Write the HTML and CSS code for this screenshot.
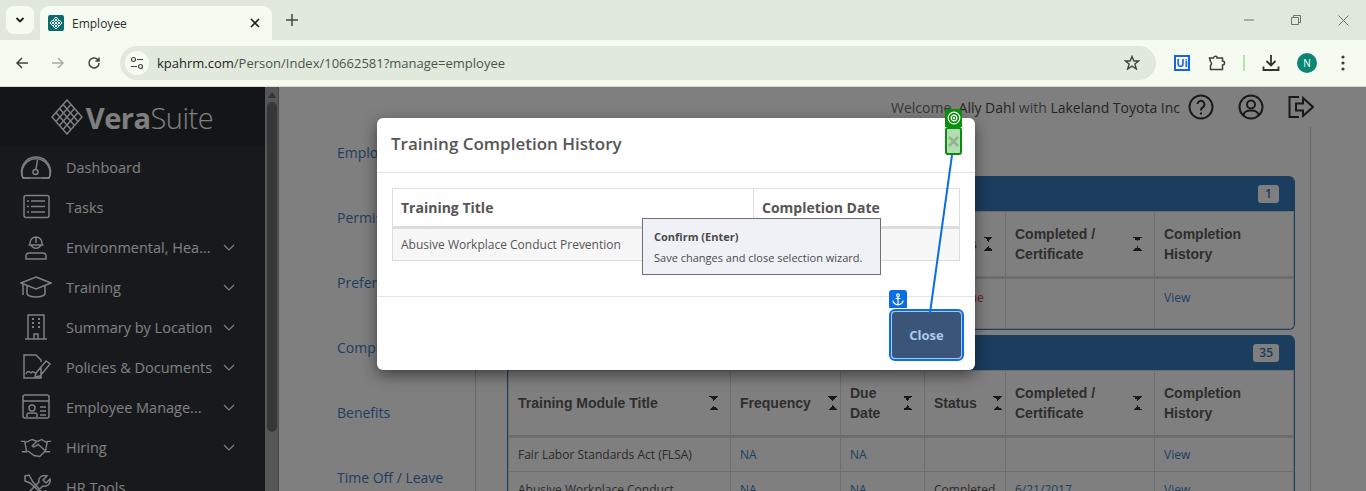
FILE: index.html
```html
<!DOCTYPE html>
<html lang="en">

<head>
    <meta charset="UTF-8">
    <title>Employee</title>
    <link rel="stylesheet" href="styles.css">
</head>

<body>
    <div class="tabstrip">
        <div class="tab-search">
            <svg width="12" height="12" viewBox="0 0 12 12"><path d="M2.5 4 6 7.5 9.5 4" fill="none" stroke="#1f1f1f" stroke-width="1.8"/></svg>
        </div>
        <div class="tab">
            <div class="favicon">
                <svg width="14" height="14" viewBox="0 0 14 14"><path d="M7 1 13 7 7 13 1 7Z M4 4 10 10 M7 1.500 M10 4 4 10 M5.500 2.500 11.500 8.500 M2.500 5.500 8.500 11.500 M8.500 2.500 2.500 8.500 M11.500 5.500 5.500 11.500" fill="none" stroke="#e6f3f2" stroke-width="1"/></svg>
            </div>
            <span class="tab-title">Employee</span>
            <svg class="tab-x" width="10" height="10" viewBox="0 0 10 10"><path d="M1 1 9 9M9 1 1 9" stroke="#1f1f1f" stroke-width="1.600"/></svg>
        </div>
        <svg class="new-tab" width="12" height="12" viewBox="0 0 12 12"><path d="M6 0V12M0 6H12" stroke="#444" stroke-width="1.500"/></svg>
        <div class="win-btns">
            <svg width="10" height="10" viewBox="0 0 10 10"><path d="M0 5H10" stroke="#6d736b" stroke-width="1"/></svg>
            <svg width="10" height="10" viewBox="0 0 10 10"><path d="M.5 2.500H7.500V9.500H.5ZM2.500 2.500V.5H9.500V7.500H7.500" fill="none" stroke="#6d736b" stroke-width="1"/></svg>
            <svg width="11" height="11" viewBox="0 0 11 11"><path d="M.5.5 10.500 10.500M10.500.5 .5 10.500" stroke="#6d736b" stroke-width="1"/></svg>
        </div>
    </div>

    <div class="toolbar">
        <svg class="nav-icon" width="14" height="14" viewBox="0 0 14 14"><path d="M13 7H2M7 2 2 7 7 12" fill="none" stroke="#3f443e" stroke-width="1.500"/></svg>
        <svg class="nav-icon" width="14" height="14" viewBox="0 0 14 14"><path d="M1 7H12M7 2 12 7 7 12" fill="none" stroke="#a9ada7" stroke-width="1.500"/></svg>
        <svg class="nav-icon" width="14" height="14" viewBox="0 0 14 14"><path d="M12 7A5 5 0 1 1 10.500 3.400L12 5M12 1.500V5H8.500" fill="none" stroke="#3f443e" stroke-width="1.500"/></svg>
        <div class="omnibox">
            <div class="site-btn">
                <svg width="14" height="14" viewBox="0 0 14 14" fill="none" stroke="#3f443e" stroke-width="1.200"><circle cx="3.500" cy="3.500" r="2"/><path d="M7 3.500H13M1 10.500H7"/><circle cx="10.500" cy="10.500" r="2"/></svg>
            </div>
            <span class="url">kpahrm.com<span class="url-path">/Person/Index/10662581?manage=employee</span></span>
            <svg class="star" width="16" height="16" viewBox="0 0 16 16"><path d="M8 1.500 9.900 6H14.700L10.900 9 12.300 14 8 11.200 3.700 14 5.100 9 1.300 6H6.100Z" fill="none" stroke="#3f443e" stroke-width="1.400"/></svg>
        </div>
        <div class="ext-ui">Ui</div>
        <svg class="ext-icon" width="18" height="18" viewBox="0 0 18 18"><path d="M1.500 4H5.500A2 2 0 0 1 9 3V4H14.500V7A2 2 0 0 1 14.500 11V15.500H2.500V11.500A2.500 2.500 0 0 0 2.500 7.500Z" fill="none" stroke="#3a3f39" stroke-width="1.500"/></svg>
        <div class="tool-sep"></div>
        <svg class="ext-dl" width="18" height="18" viewBox="0 0 18 18"><path d="M9 1V11M4.500 7 9 11.500 13.500 7M1.500 12.500V16H16.500V12.500" fill="none" stroke="#2f352e" stroke-width="1.800"/></svg>
        <div class="avatar">N</div>
        <svg class="dots" width="4" height="16" viewBox="0 0 4 16"><circle cx="2" cy="2" r="1.600" fill="#3a3f39"/><circle cx="2" cy="8" r="1.600" fill="#3a3f39"/><circle cx="2" cy="14" r="1.600" fill="#3a3f39"/></svg>
    </div>

    <div class="app">
        <aside class="sidebar">
            <div class="logo">
                <svg width="32" height="36" viewBox="0 0 32 36" fill="none" stroke="#fff" stroke-width="1.500"><path d="M16 1 31 18 16 35 1 18Z M8.500 9.500 23.500 26.500 M12 5.500 27 22.500 M5 13.500 20 30.500 M23.500 9.500 8.500 26.500 M27 13.500 12 30.500 M20 5.500 5 22.500"/></svg>
                <span class="logo-text"><b>Vera</b>Suite</span>
            </div>
            <nav class="side-nav">
                <a class="side-item">
                    <svg class="side-icon" viewBox="0 0 32 26" fill="none"><path d="M3 24A14 14 0 1 1 29 24Z" fill="none"/><path d="M3 24H10M22 24H29M3 24A14.500 14.500 0 1 1 29 24M17.500 6 16 15"/><circle cx="15.500" cy="18" r="2.500"/></svg>
                    <span>Dashboard</span>
                </a>
                <a class="side-item">
                    <svg class="side-icon" viewBox="0 0 32 26" fill="none"><rect x="4" y="1.500" width="25" height="22" rx="2"/><path d="M11 7H25M11 12.500H25M11 18H25M7 7H9M7 12.500H9M7 18H9"/></svg>
                    <span>Tasks</span>
                </a>
                <a class="side-item">
                    <svg class="side-icon" viewBox="0 0 32 26" fill="none"><path d="M10 9A6 6 0 0 1 22 9V11H10ZM8.500 11H23.500M16 3V9M11 11A5.500 5.500 0 0 0 21 11M6 25V21.500A3 3 0 0 1 9 19H23A3 3 0 0 1 26 21.500V25Z"/></svg>
                    <span>Environmental, Hea...</span>
                    <svg class="caret" viewBox="0 0 12 7"><path d="M1 1 6 6 11 1"/></svg>
                </a>
                <a class="side-item">
                    <svg class="side-icon" viewBox="0 0 32 26" fill="none"><path d="M16 3 31 9 16 15 1 9ZM7 12V20C10 24 22 24 25 20V12M3 10V21"/></svg>
                    <span>Training</span>
                    <svg class="caret" viewBox="0 0 12 7"><path d="M1 1 6 6 11 1"/></svg>
                </a>
                <a class="side-item">
                    <svg class="side-icon" viewBox="0 0 32 26" fill="none"><path d="M8 1H24V25H8ZM5 25H27M14 25V20H18V25"/><path d="M12 5H14M18 5H20M12 9H14M18 9H20M12 13H14M18 13H20" stroke-width="2"/></svg>
                    <span>Summary by Location</span>
                    <svg class="caret" viewBox="0 0 12 7"><path d="M1 1 6 6 11 1"/></svg>
                </a>
                <a class="side-item">
                    <svg class="side-icon" viewBox="0 0 32 26" fill="none"><path d="M21 13V24H4V1H16L21 6V8M6 20C9 14 10 21 12 18 13 17 14 19 16 19M16 19 26 7 30 10 20 22 15 23Z"/></svg>
                    <span>Policies &amp; Documents</span>
                    <svg class="caret" viewBox="0 0 12 7"><path d="M1 1 6 6 11 1"/></svg>
                </a>
                <a class="side-item">
                    <svg class="side-icon" viewBox="0 0 32 26" fill="none"><rect x="3" y="1" width="26" height="23" rx="2"/><path d="M3 7H29M20 13H26M20 17H26M20 21H26M7 23V21A2 2 0 0 1 9 19H15A2 2 0 0 1 17 21V23"/><circle cx="12" cy="14" r="3"/></svg>
                    <span>Employee Manage...</span>
                    <svg class="caret" viewBox="0 0 12 7"><path d="M1 1 6 6 11 1"/></svg>
                </a>
                <a class="side-item">
                    <svg class="side-icon" viewBox="0 0 34 26" fill="none"><path d="M1 7H5L7 18H2M33 7H29L27 18H32M6 8 13 5 18 7 13 12C15 14 18 11 19 10L27 17 21 23 15 22 8 17M19 7 23 5 28 8"/></svg>
                    <span>Hiring</span>
                    <svg class="caret" viewBox="0 0 12 7"><path d="M1 1 6 6 11 1"/></svg>
                </a>
                <a class="side-item">
                    <svg class="side-icon" viewBox="0 0 32 26" fill="none"><path d="M5 2 9 1 13 8 22 18 26 17 28 22 25 25 21 22 20 18 10 9 5 7ZM27 2 23 6 26 9 30 5C31 10 27 13 23 12L9 24H6V21L19 8C18 4 22 0 27 2Z"/></svg>
                    <span>HR Tools</span>
                </a>
            </nav>
        </aside>

        <div class="side-scroll">
            <div class="scroll-arrow"></div>
            <div class="scroll-thumb"></div>
        </div>

        <main class="content">
            <header class="top-bar">
                <span class="welcome">Welcome, <span class="strong">Ally Dahl</span> with <span class="strong">Lakeland Toyota Inc</span></span>
                <svg class="top-icon" viewBox="0 0 26 26" fill="none"><circle cx="13" cy="13" r="11.500"/><path d="M9.500 10A3.500 3.500 0 1 1 14.500 13.500C13.500 14 13 15 13 16.500M13 18.500V20.500"/></svg>
                <svg class="top-icon" viewBox="0 0 26 26" fill="none"><circle cx="13" cy="13" r="11.500"/><circle cx="13" cy="10.500" r="4"/><path d="M5.500 21.500C6 17 9 16.500 13 16.500S20 17 20.500 21.500"/></svg>
                <svg class="top-icon exit" viewBox="0 0 26 22" fill="none"><path d="M11 1H1.500V21H11M8 7.500H15V2L25 11 15 20V14.500H8Z"/></svg>
            </header>

            <div class="content-body">
                <ul class="section-nav">
                    <li>Employee</li>
                    <li>Permissions</li>
                    <li>Preferences</li>
                    <li>Compliance</li>
                    <li>Benefits</li>
                    <li>Time Off / Leave</li>
                </ul>

                <div class="panels">
                    <section class="panel">
                        <div class="panel-head"><span class="count">1</span></div>
                        <table class="grid">
                            <colgroup><col class="c-title"><col class="c-freq"><col class="c-due"><col class="c-status"><col class="c-done"><col></colgroup>
                            <tr class="grid-head">
                                <th>Training Module Title</th>
                                <th>Frequency</th>
                                <th>Due Date</th>
                                <th class="sort">Status</th>
                                <th class="sort">Completed / Certificate</th>
                                <th>Completion History</th>
                            </tr>
                            <tr class="row-tall">
                                <td>Abusive Workplace Conduct Prevention</td>
                                <td>NA</td>
                                <td>NA</td>
                                <td class="overdue">Past Due</td>
                                <td></td>
                                <td class="link">View</td>
                            </tr>
                        </table>
                    </section>

                    <section class="panel">
                        <div class="panel-head"><span class="count">35</span></div>
                        <table class="grid grid-wide">
                            <colgroup><col class="c-title"><col class="c-freq"><col class="c-due"><col class="c-status"><col class="c-done"><col></colgroup>
                            <tr class="grid-head">
                                <th class="sort">Training Module Title</th>
                                <th class="sort tight">Frequency</th>
                                <th class="sort">Due<br>Date</th>
                                <th class="sort tight">Status</th>
                                <th class="sort">Completed / Certificate</th>
                                <th>Completion History</th>
                            </tr>
                            <tr>
                                <td>Fair Labor Standards Act (FLSA)</td>
                                <td class="link">NA</td>
                                <td class="link">NA</td>
                                <td></td>
                                <td></td>
                                <td class="link">View</td>
                            </tr>
                            <tr>
                                <td>Abusive Workplace Conduct</td>
                                <td class="link">NA</td>
                                <td class="link">NA</td>
                                <td>Completed</td>
                                <td class="link">6/21/2017</td>
                                <td class="link">View</td>
                            </tr>
                        </table>
                    </section>
                </div>
            </div>
        </main>

        <div class="backdrop"></div>

        <div class="modal">
            <div class="modal-head">Training Completion History</div>
            <div class="modal-body">
                <table class="history">
                    <tr>
                        <th class="h-title">Training Title</th>
                        <th>Completion Date</th>
                    </tr>
                    <tr>
                        <td>Abusive Workplace Conduct Prevention</td>
                        <td></td>
                    </tr>
                </table>
            </div>
            <div class="modal-foot">
                <button class="btn-close">Close</button>
            </div>

            <div class="tooltip">
                <div class="tooltip-title">Confirm (Enter)</div>
                <div class="tooltip-text">Save changes and close selection wizard.</div>
            </div>

            <!-- selector overlay: target on the x, anchor on Close -->
            <div class="target-box">
                <svg width="11" height="11" viewBox="0 0 11 11"><path d="M1 1 10 10M10 1 1 10" stroke="#8eb58e" stroke-width="2.500"/></svg>
            </div>
            <div class="target-tab">
                <svg width="14" height="14" viewBox="0 0 14 14" fill="none" stroke="#fff"><circle cx="7" cy="7" r="5.800" stroke-width="1.200"/><circle cx="7" cy="7" r="2.800" stroke-width="1.200"/><circle cx="7" cy="7" r=".8" fill="#fff"/></svg>
            </div>
            <div class="anchor-tab">
                <svg width="12" height="13" viewBox="0 0 12 13" fill="none" stroke="#fff" stroke-width="1.200"><circle cx="6" cy="2.200" r="1.300"/><path d="M6 3.500V12M3.500 5.500H8.500M1 7.500C1 10.500 4 11.500 6 12 8 11.500 11 10.500 11 7.500"/></svg>
            </div>
            <svg class="link-line" width="40" height="170" viewBox="0 0 40 170"><path d="M31 0 9 158" stroke="#0a6de4" stroke-width="2"/></svg>
        </div>
    </div>
</body>

</html>
```

FILE: styles.css
```css
* {
    margin: 0px;
    padding: 0px;
    box-sizing: border-box;
}

html, body {
    height: 100%;
    overflow: hidden;
}

body {
    font-family: "Open Sans", sans-serif;
    background-color: #fff;
}

/* browser chrome */
.tabstrip {
    height: 40px;
    background-color: #dfe8da;
    display: flex;
    align-items: flex-end;
    padding-left: 6px;
}

.tab-search {
    width: 28px;
    height: 28px;
    margin-bottom: 6px;
    border-radius: 8px;
    background-color: #f6fbf2;
    display: flex;
    align-items: center;
    justify-content: center;
}

.tab {
    width: 232px;
    height: 34px;
    margin-left: 6px;
    background-color: #f6fbf2;
    border-radius: 9px 9px 0 0;
    display: flex;
    align-items: center;
    padding-left: 8px;
}

.favicon {
    width: 16px;
    height: 16px;
    border-radius: 2px;
    background-color: #0e6b6b;
    display: flex;
    align-items: center;
    justify-content: center;
}

.tab-title {
    margin-left: 8px;
    font-size: 12px;
    color: #2b2f2a;
    flex: 1;
}

.tab-x {
    margin-right: 12px;
}

.new-tab {
    margin: 0 0 14px 14px;
}

.win-btns {
    margin-left: auto;
    height: 40px;
    display: flex;
    align-items: center;
    gap: 37px;
    padding-right: 17px;
}

.toolbar {
    height: 47px;
    background-color: #f6fbf2;
    display: flex;
    align-items: center;
    padding: 0 0 1px 15px;
    border-bottom: 1px solid #d8ddd4;
}

.nav-icon {
    margin-right: 22px;
}

.nav-icon:nth-child(3) {
    margin-right: 19px;
}

.omnibox {
    width: 1036px;
    height: 34px;
    background-color: #e0e9dc;
    border-radius: 17px;
    display: flex;
    align-items: center;
    padding-left: 5px;
}

.site-btn {
    width: 24px;
    height: 24px;
    border-radius: 50%;
    background-color: #f6fbf2;
    display: flex;
    align-items: center;
    justify-content: center;
}

.url {
    margin-left: 8px;
    font-size: 13px;
    color: #1f241e;
    flex: 1;
}

.url-path {
    color: #4e544c;
}

.star {
    margin-right: 16px;
}

.ext-ui {
    margin-left: 18px;
    width: 16px;
    height: 16px;
    border: 2px solid #1266e0;
    color: #1266e0;
    background-color: #fff;
    font-size: 11px;
    font-weight: 700;
    line-height: 12px;
    text-align: center;
}

.ext-icon {
    margin-left: 18px;
}

.tool-sep {
    width: 2px;
    height: 16px;
    margin-left: 17px;
    background-color: #b7e3a9;
}

.ext-dl {
    margin-left: 17px;
}

.avatar {
    margin-left: 17px;
    width: 20px;
    height: 20px;
    border-radius: 50%;
    background-color: #0a8672;
    color: #fff;
    font-size: 10px;
    line-height: 20px;
    text-align: center;
}

.dots {
    margin-left: 24px;
}

/* app below the chrome */
.app {
    height: 404px;
    display: flex;
    overflow: hidden;
    position: relative;
    background-color: #fff;
}

.sidebar {
    width: 265px;
    flex-shrink: 0;
    background-color: #2e3238;
    color: #fff;
}

.logo {
    height: 60px;
    background-color: #282a2e;
    display: flex;
    align-items: center;
    justify-content: center;
    gap: 3px;
    padding-right: 1px;
}

.logo-text {
    font-size: 29px;
    letter-spacing: -.5px;
    font-weight: 300;
}

.logo-text b {
    font-weight: 700;
}

.side-nav {
    display: flex;
    flex-direction: column;
}

.side-item {
    height: 40px;
    flex-shrink: 0;
    display: flex;
    align-items: center;
    padding: 0 30px 0 20px;
    font-size: 14.500px;
}

.side-icon {
    width: 32px;
    height: 26px;
    margin-right: 14px;
    stroke: #fff;
    stroke-width: 1.500;
    flex-shrink: 0;
}

.side-item span {
    flex: 1;
    white-space: nowrap;
}

.caret {
    width: 12px;
    height: 7px;
    fill: none;
    stroke: #fff;
    stroke-width: 1.200;
}

.side-scroll {
    width: 14px;
    flex-shrink: 0;
    background-color: #adadad;
    padding: 3px 2px 0;
    border-right: 1px solid #8e8e8e;
}

.scroll-arrow {
    width: 0;
    height: 0;
    margin: 2px auto 4px;
    border-left: 4px solid transparent;
    border-right: 4px solid transparent;
    border-bottom: 6px solid #666;
}

.scroll-thumb {
    width: 10px;
    height: 330px;
    border-radius: 5px;
    background-color: #6f6f6f;
}

.content {
    flex: 1;
    display: flex;
    flex-direction: column;
    min-width: 0;
}

.top-bar {
    height: 40px;
    display: flex;
    align-items: center;
    padding-left: 612px;
    color: #6e6e6e;
    flex-shrink: 0;
}

.welcome {
    font-size: 14px;
    white-space: nowrap;
    width: 297px;
}

.strong {
    color: #4a4a4a;
}

.top-icon {
    width: 26px;
    height: 26px;
    margin-right: 24px;
    stroke: #333;
    stroke-width: 2;
    flex-shrink: 0;
}

.top-icon.exit {
    height: 22px;
}

.content-body {
    display: flex;
    flex: 1;
    border-right: 1px solid #ccc;
    margin-right: 55px;
    min-height: 0;
    padding-left: 58px;
}

.section-nav {
    list-style: none;
    width: 139px;
    border-right: 1px solid #ccc;
    color: #3d7ec0;
    font-size: 14px;
    padding-top: 16px;
    flex-shrink: 0;
    white-space: nowrap;
    overflow: hidden;
}

.section-nav li {
    height: 65px;
}

.panels {
    margin-left: 31px;
    padding-top: 49px;
    width: 788px;
    flex-shrink: 0;
}

.panel {
    border: 1px solid #367abc;
    border-top: 0;
    border-radius: 6px;
    margin-bottom: 5px;
    overflow: hidden;
    background-color: #fff;
}

.panel-head {
    height: 35px;
    background-color: #367abc;
    display: flex;
    align-items: center;
    justify-content: flex-end;
    padding-right: 15px;
}

.count {
    background-color: #fff;
    color: #367abc;
    font-size: 12px;
    font-weight: 600;
    min-width: 21px;
    padding: 0 6px;
    height: 18px;
    line-height: 18px;
    border-radius: 3px;
    text-align: center;
}

.grid {
    width: 100%;
    table-layout: fixed;
    border-collapse: collapse;
    font-size: 12px;
    color: #555;
}

.c-title {
    width: 222px;
}

.c-freq {
    width: 110px;
}

.c-due {
    width: 84px;
}

.c-status {
    width: 81px;
}

.c-done {
    width: 149px;
}

.grid th {
    text-align: left;
    font-family: "Liberation Sans", sans-serif;
    font-size: 14px;
    line-height: 20px;
    color: #5c5c5c;
    padding: 0 36px 0 9px;
    border: 1px solid #dcdcdc;
    border-bottom: 3px solid #dcdcdc;
    position: relative;
}

.grid th.sort::after {
    content: "";
    position: absolute;
    right: 12px;
    top: 50%;
    width: 9px;
    height: 14px;
    margin-top: -7px;
    background:
        linear-gradient(45deg, transparent 50%, #333 50%) 0 0 / 5px 5px no-repeat,
        linear-gradient(-45deg, transparent 50%, #333 50%) 4px 0 / 5px 5px no-repeat,
        linear-gradient(135deg, transparent 50%, #333 50%) 0 9px / 5px 5px no-repeat,
        linear-gradient(-135deg, transparent 50%, #333 50%) 4px 9px / 5px 5px no-repeat;
}

.grid th.tight {
    padding-right: 4px;
}

.grid th.tight::after {
    right: 3px;
}

.grid-head {
    height: 66px;
}

.grid td {
    vertical-align: middle;
    padding: 0 9px;
    height: 35px;
    border: 1px solid #dcdcdc;
    white-space: nowrap;
    overflow: hidden;
}

.row-tall td {
    height: 51px;
    vertical-align: top;
    padding-top: 10px;
}

.grid .link {
    color: #3d7ec0;
}

.grid .overdue {
    color: #c44;
}

.backdrop {
    position: absolute;
    inset: 0;
    background-color: rgba(0, 0, 0, .5);
}

/* modal */
.modal {
    position: absolute;
    left: 377px;
    top: 31px;
    width: 598px;
    height: 252px;
    background-color: #fff;
    border-radius: 6px;
    box-shadow: 0 5px 15px rgba(0, 0, 0, .5);
    display: flex;
    flex-direction: column;
    color: #555;
}

.modal-head {
    height: 55px;
    border-bottom: 1px solid #e5e5e5;
    font-size: 17px;
    font-weight: 600;
    padding: 14px 14px 0;
}

.modal-body {
    height: 124px;
    padding: 15px 15px 0;
    border-bottom: 1px solid #e5e5e5;
}

.history {
    width: 568px;
    table-layout: fixed;
    border-collapse: collapse;
    font-size: 12px;
}

.history th {
    height: 39px;
    text-align: left;
    font-size: 14px;
    font-weight: 700;
    padding: 0 8px;
    border: 1px solid #ddd;
    border-bottom: 3px solid #ddd;
}

.h-title {
    width: 361px;
}

.history td {
    height: 33px;
    padding: 0 8px;
    background-color: #f7f7f7;
    border: 1px solid #ddd;
}

.modal-foot {
    flex: 1;
    display: flex;
    justify-content: flex-end;
    align-items: flex-start;
    padding: 14px 13px 0 0;
}

.btn-close {
    width: 71px;
    height: 48px;
    background-color: #3a5578;
    color: #a9c9ee;
    font-family: "Open Sans", sans-serif;
    font-size: 13px;
    font-weight: 700;
    border: 1px solid #a9c9ee;
    border-radius: 4px;
    outline: 2px solid #0a6de4;
    outline-offset: 0;
}

.tooltip {
    position: absolute;
    left: 265px;
    top: 100px;
    width: 239px;
    height: 57px;
    background-color: #eff1f6;
    border: 1px solid #6f6f77;
    padding: 10px 11px 0;
    color: #4a4a4a;
    font-size: 11px;
}

.tooltip-title {
    font-weight: 700;
    margin-bottom: 6px;
}

.tooltip-text {
    white-space: nowrap;
}

.target-box {
    position: absolute;
    left: 568px;
    top: 9px;
    width: 17px;
    height: 28px;
    background-color: #b4dcb4;
    border: 2px solid #0a8f0a;
    border-radius: 3px;
    display: flex;
    align-items: center;
    justify-content: center;
}

.target-tab {
    position: absolute;
    left: 568px;
    top: -9px;
    width: 17px;
    height: 18px;
    background-color: #0a8f0a;
    border-radius: 3px 3px 0 0;
    display: flex;
    align-items: center;
    justify-content: center;
}

.anchor-tab {
    position: absolute;
    left: 512px;
    top: 172px;
    width: 18px;
    height: 18px;
    background-color: #0a6de4;
    border-radius: 3px 3px 0 0;
    display: flex;
    align-items: center;
    justify-content: center;
}

.link-line {
    position: absolute;
    left: 544px;
    top: 37px;
}
```
